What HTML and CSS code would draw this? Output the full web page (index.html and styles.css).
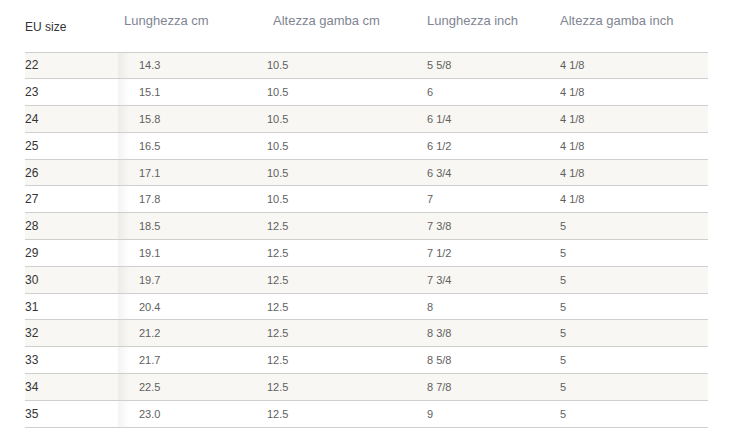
FILE: index.html
```html
<!DOCTYPE html>
<html lang="it">
<head>
<meta charset="utf-8">
<title>Tabella taglie</title>
<link rel="stylesheet" href="styles.css">
</head>
<body>
<table class="size-table">
  <thead>
    <tr>
      <th class="c1 eu">EU size</th>
      <th class="c2">Lunghezza cm</th>
      <th class="c3">Altezza gamba cm</th>
      <th class="c4">Lunghezza inch</th>
      <th class="c5">Altezza gamba inch</th>
    </tr>
  </thead>
  <tbody>
    <tr><td class="c1">22</td><td class="c2">14.3</td><td class="c3">10.5</td><td class="c4">5 5/8</td><td class="c5">4 1/8</td></tr>
    <tr><td class="c1">23</td><td class="c2">15.1</td><td class="c3">10.5</td><td class="c4">6</td><td class="c5">4 1/8</td></tr>
    <tr><td class="c1">24</td><td class="c2">15.8</td><td class="c3">10.5</td><td class="c4">6 1/4</td><td class="c5">4 1/8</td></tr>
    <tr><td class="c1">25</td><td class="c2">16.5</td><td class="c3">10.5</td><td class="c4">6 1/2</td><td class="c5">4 1/8</td></tr>
    <tr><td class="c1">26</td><td class="c2">17.1</td><td class="c3">10.5</td><td class="c4">6 3/4</td><td class="c5">4 1/8</td></tr>
    <tr><td class="c1">27</td><td class="c2">17.8</td><td class="c3">10.5</td><td class="c4">7</td><td class="c5">4 1/8</td></tr>
    <tr><td class="c1">28</td><td class="c2">18.5</td><td class="c3">12.5</td><td class="c4">7 3/8</td><td class="c5">5</td></tr>
    <tr><td class="c1">29</td><td class="c2">19.1</td><td class="c3">12.5</td><td class="c4">7 1/2</td><td class="c5">5</td></tr>
    <tr><td class="c1">30</td><td class="c2">19.7</td><td class="c3">12.5</td><td class="c4">7 3/4</td><td class="c5">5</td></tr>
    <tr><td class="c1">31</td><td class="c2">20.4</td><td class="c3">12.5</td><td class="c4">8</td><td class="c5">5</td></tr>
    <tr><td class="c1">32</td><td class="c2">21.2</td><td class="c3">12.5</td><td class="c4">8 3/8</td><td class="c5">5</td></tr>
    <tr><td class="c1">33</td><td class="c2">21.7</td><td class="c3">12.5</td><td class="c4">8 5/8</td><td class="c5">5</td></tr>
    <tr><td class="c1">34</td><td class="c2">22.5</td><td class="c3">12.5</td><td class="c4">8 7/8</td><td class="c5">5</td></tr>
    <tr><td class="c1">35</td><td class="c2">23.0</td><td class="c3">12.5</td><td class="c4">9</td><td class="c5">5</td></tr>
  </tbody>
</table>
</body>
</html>
```
FILE: styles.css
```css
html, body {
  margin: 0;
  padding: 0;
  background: #ffffff;
}
body {
  font-family: "Liberation Sans", Arial, sans-serif;
}
.size-table {
  margin: 0 0 0 25px;
  border-collapse: collapse;
  table-layout: fixed;
  width: 683px;
}
.size-table th,
.size-table td {
  padding: 0;
  text-align: left;
  white-space: nowrap;
}
.size-table th {
  height: 52px;
  font-weight: normal;
  font-size: 13px;
  color: #808592;
  vertical-align: top;
  padding-top: 13px;
  box-sizing: border-box;
  border-bottom: 1px solid #cfcfcf;
}
.size-table th.eu {
  font-size: 12px;
  color: #333333;
  padding-top: 20px;
}
.size-table td {
  height: 25.8px;
  font-size: 11px;
  color: #5f5f5f;
  border-bottom: 1px solid #cfcfcf;
  vertical-align: middle;
}
.size-table tbody tr:nth-child(odd) td {
  background-color: #f8f7f3;
}
.size-table td.c1 {
  color: #333333;
  font-size: 12px;
}
.c1 { width: 93px; }
.c2 { width: 149px; }
.c3 { width: 160px; }
.c4 { width: 133px; }
.c5 { width: 148px; }
.size-table th.c2 { padding-left: 6px; }
.size-table th.c3 { padding-left: 6px; }
.size-table td.c2 {
  padding-left: 21px;
  background-image: linear-gradient(to right, rgba(0,0,0,0.045), rgba(0,0,0,0) 12px);
}
```
